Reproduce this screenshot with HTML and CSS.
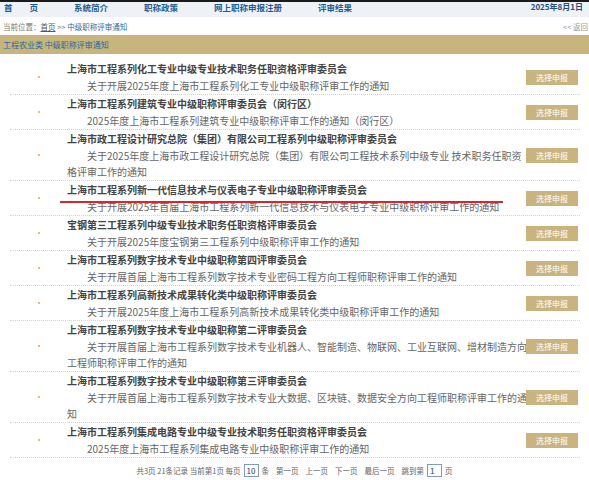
FILE: index.html
```html
<!DOCTYPE html>
<html lang="zh-CN">
<head>
<meta charset="utf-8">
<title>中级职称评审通知</title>
<link rel="stylesheet" href="styles.css">
</head>
<body>
<div class="page">
  <div class="nav">
    <div class="nav-items">
      <span class="nav-item">首　　页</span>
      <span class="nav-item">系统简介</span>
      <span class="nav-item">职称政策</span>
      <span class="nav-item">网上职称申报注册</span>
      <span class="nav-item">评审结果</span>
    </div>
    <span class="nav-date">2025年8月1日</span>
  </div>
  <div class="crumb">
    <span>当前位置：<a class="crumb-home">首页</a> &gt;&gt; <span class="crumb-cur">中级职称评审通知</span></span>
    <span class="crumb-back">&lt;&lt; 返回</span>
  </div>
  <div class="section-bar">工程农业类 中级职称评审通知</div>

  <ul class="list">
    <li class="row">
      <div class="bullet"><i class="dot"></i></div>
      <div class="content">
        <div class="title">上海市工程系列化工专业中级专业技术职务任职资格评审委员会</div>
        <div class="sub">关于开展2025年度上海市工程系列化工专业中级职称评审工作的通知</div>
      </div>
      <div class="action"><span class="btn">选择申报</span></div>
    </li>
    <li class="row">
      <div class="bullet"><i class="dot"></i></div>
      <div class="content">
        <div class="title">上海市工程系列建筑专业中级职称评审委员会（闵行区）</div>
        <div class="sub">2025年度上海市工程系列建筑专业中级职称评审工作的通知（闵行区）</div>
      </div>
      <div class="action"><span class="btn">选择申报</span></div>
    </li>
    <li class="row">
      <div class="bullet"><i class="dot"></i></div>
      <div class="content">
        <div class="title">上海市政工程设计研究总院（集团）有限公司工程系列中级职称评审委员会</div>
        <div class="sub">关于2025年度上海市政工程设计研究总院（集团）有限公司工程技术系列中级专业 技术职务任职资格评审工作的通知</div>
      </div>
      <div class="action"><span class="btn">选择申报</span></div>
    </li>
    <li class="row">
      <div class="bullet"><i class="dot"></i></div>
      <div class="content">
        <div class="title">上海市工程系列新一代信息技术与仪表电子专业中级职称评审委员会</div>
        <div class="sub">关于开展2025年首届上海市工程系列新一代信息技术与仪表电子专业中级职称评审工作的通知</div>
      </div>
      <div class="action"><span class="btn">选择申报</span></div>
      <span class="mark"></span>
    </li>
    <li class="row">
      <div class="bullet"><i class="dot"></i></div>
      <div class="content">
        <div class="title">宝钢第三工程系列中级专业技术职务任职资格评审委员会</div>
        <div class="sub">关于开展2025年度宝钢第三工程系列中级职称评审工作的通知</div>
      </div>
      <div class="action"><span class="btn">选择申报</span></div>
    </li>
    <li class="row">
      <div class="bullet"><i class="dot"></i></div>
      <div class="content">
        <div class="title">上海市工程系列数字技术专业中级职称第四评审委员会</div>
        <div class="sub">关于开展首届上海市工程系列数字技术专业密码工程方向工程师职称评审工作的通知</div>
      </div>
      <div class="action"><span class="btn">选择申报</span></div>
    </li>
    <li class="row">
      <div class="bullet"><i class="dot"></i></div>
      <div class="content">
        <div class="title">上海市工程系列高新技术成果转化类中级职称评审委员会</div>
        <div class="sub">关于开展2025年度上海市工程系列高新技术成果转化类中级职称评审工作的通知</div>
      </div>
      <div class="action"><span class="btn">选择申报</span></div>
    </li>
    <li class="row">
      <div class="bullet"><i class="dot"></i></div>
      <div class="content">
        <div class="title">上海市工程系列数字技术专业中级职称第二评审委员会</div>
        <div class="sub">关于开展首届上海市工程系列数字技术专业机器人、智能制造、物联网、工业互联网、增材制造方向工程师职称评审工作的通知</div>
      </div>
      <div class="action"><span class="btn">选择申报</span></div>
    </li>
    <li class="row">
      <div class="bullet"><i class="dot"></i></div>
      <div class="content">
        <div class="title">上海市工程系列数字技术专业中级职称第三评审委员会</div>
        <div class="sub">关于开展首届上海市工程系列数字技术专业大数据、区块链、数据安全方向工程师职称评审工作的通知</div>
      </div>
      <div class="action"><span class="btn">选择申报</span></div>
    </li>
    <li class="row">
      <div class="bullet"><i class="dot"></i></div>
      <div class="content">
        <div class="title">上海市工程系列集成电路专业中级专业技术职务任职资格评审委员会</div>
        <div class="sub">2025年度上海市工程系列集成电路专业中级职称评审工作的通知</div>
      </div>
      <div class="action"><span class="btn">选择申报</span></div>
    </li>
  </ul>

  <div class="pager">
    <span>共3页 21条记录 当前第1页 每页</span>
    <span class="pg-box">10</span>
    <span>条</span>
    <span class="pg-link">第一页</span>
    <span class="pg-link">上一页</span>
    <span class="pg-link">下一页</span>
    <span class="pg-link">最后一页</span>
    <span class="pg-link">跳到第</span>
    <span class="pg-box">1</span>
    <span>页</span>
  </div>
</div>
</body>
</html>
```

FILE: styles.css
```css
* { box-sizing: border-box; }
html, body { margin: 0; padding: 0; background: #fff; overflow: hidden; }
body {
  font-family: "Noto Sans CJK SC", "Noto Sans", sans-serif;
  color: #666;
}
.page { width: 589px; }

.nav {
  display: flex;
  justify-content: space-between;
  align-items: flex-start;
  border-top: 2px solid #1b1b1b;
  background: #eef2f6;
  height: 17px;
  padding: 0 6px 0 4px;
}
.nav-items { display: flex; gap: 36px; }
.nav-item, .nav-date {
  font-size: 8.5px;
  line-height: 10px;
  font-weight: bold;
  color: #1f5d92;
}
.nav-date { font-size: 8px; color: #24507a; }

.crumb {
  display: flex;
  justify-content: space-between;
  height: 18px;
  padding: 1px 1px 0 3px;
  font-size: 7.5px;
  line-height: 17px;
  color: #777;
}
.crumb-home { color: #555; text-decoration: underline; }
.crumb-cur { color: #2b6ca3; }
.crumb-back { color: #999; }

.section-bar {
  height: 19px;
  background: #c8b47d;
  padding-left: 3px;
  font-size: 8px;
  line-height: 19px;
  color: #2b68a0;
}

.list {
  list-style: none;
  margin: 6px 9px 0 10px;
  padding: 0;
}
.row {
  position: relative;
  display: flex;
  align-items: center;
  border-bottom: 1px dotted #d4d4d4;
}
.bullet {
  width: 57px;
  flex: none;
  display: flex;
  justify-content: center;
}
.dot {
  display: block;
  width: 2px;
  height: 2px;
  background: #f2a04f;
  border-radius: 1px;
}
.content {
  flex: 1;
  min-width: 0;
  margin-right: -2px;
}
.title {
  font-size: 10px;
  line-height: 18px;
  font-weight: bold;
  color: #444;
}
.sub {
  font-size: 10px;
  line-height: 16px;
  text-indent: 2em;
  color: #666;
}
.action {
  width: 54px;
  flex: none;
  padding-right: 2px;
}
.btn {
  display: block;
  width: 52px;
  height: 15px;
  background: #c9b47f;
  color: #fff;
  font-size: 8px;
  line-height: 15px;
  text-align: center;
}
.mark {
  position: absolute;
  left: 50px;
  top: 20px;
  width: 443px;
  height: 1.5px;
  background: #d8262c;
}

.pager {
  display: flex;
  justify-content: center;
  align-items: center;
  gap: 3px;
  margin-top: 6px;
  font-size: 7.5px;
  line-height: 12px;
  color: #666;
}
.pg-link { margin-left: 4px; }
.pg-box {
  display: inline-block;
  width: 15px;
  height: 13px;
  border: 1px solid #7f9db9;
  color: #1c3f6e;
  font-size: 8px;
  line-height: 11px;
  padding-left: 2px;
}
```
